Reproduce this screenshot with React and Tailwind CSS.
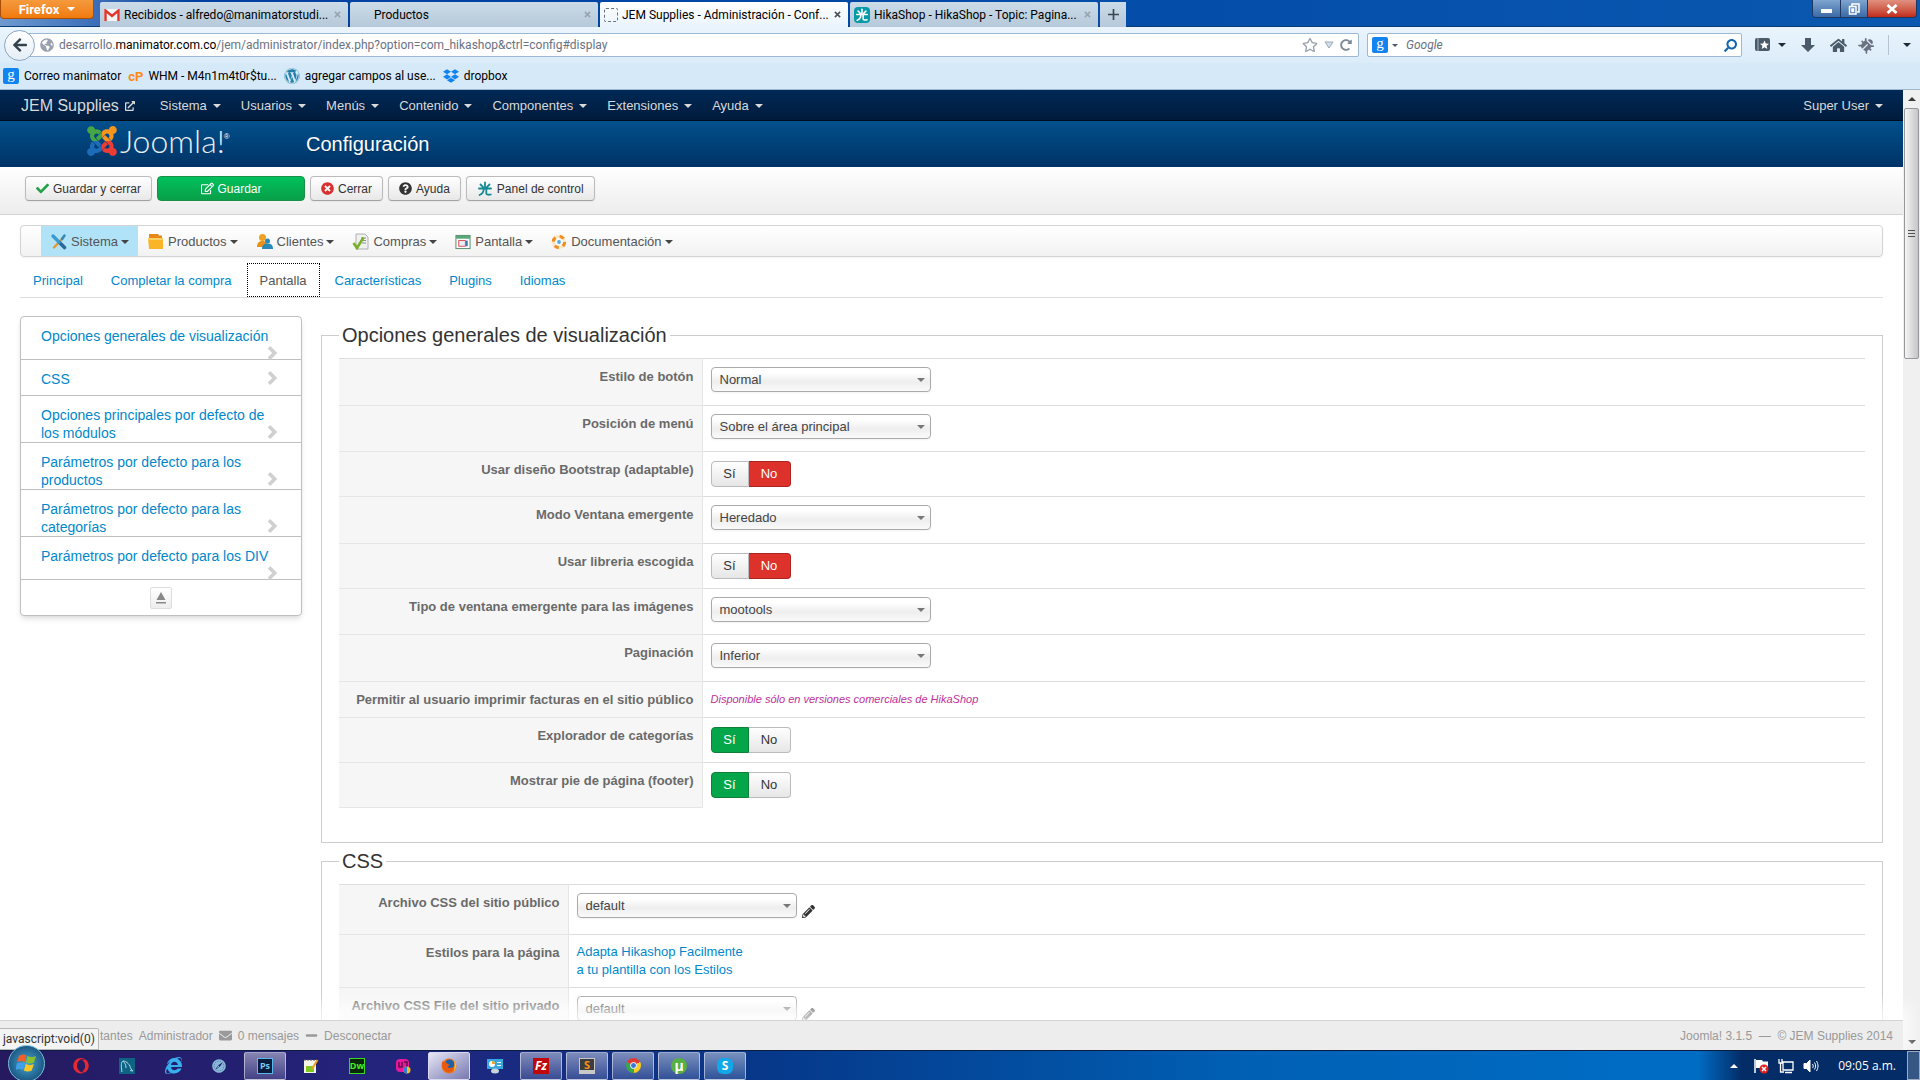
import React, { useState } from 'react'
import {
  FaJoomla,
  FaCheck,
  FaRegEdit,
  FaTimesCircle,
  FaQuestionCircle,
  FaExternalLinkAlt,
  FaWordpress,
  FaDropbox,
  FaGlobeAmericas,
  FaRegStar,
  FaPencilAlt,
  FaEnvelope,
  FaMinus,
  FaOpera,
  FaInternetExplorer,
  FaSafari,
  FaArrowLeft,
  FaHome,
  FaSearch,
  FaRedoAlt,
  FaBug,
} from 'react-icons/fa'

const TABS = [
  { title: 'Recibidos - alfredo@manimatorstudi...', icon: 'gmail' },
  { title: 'Productos' },
  { title: 'JEM Supplies - Administración - Conf...', icon: 'blank', active: true },
  { title: 'HikaShop - HikaShop - Topic: Pagina...', icon: 'hika' },
]

const NAV = ['Sistema', 'Usuarios', 'Menús', 'Contenido', 'Componentes', 'Extensiones', 'Ayuda']

const CONFIG_TABS = ['Principal', 'Completar la compra', 'Pantalla', 'Características', 'Plugins', 'Idiomas']

const SECTIONS = [
  'Opciones generales de visualización',
  'CSS',
  'Opciones principales por defecto de los módulos',
  'Parámetros por defecto para los productos',
  'Parámetros por defecto para las categorías',
  'Parámetros por defecto para los DIV',
]

const DISPLAY_ROWS = [
  { id: 'button_style', label: 'Estilo de botón', type: 'select', value: 'Normal', height: 'h-[47px]' },
  { id: 'menu_position', label: 'Posición de menú', type: 'select', value: 'Sobre el área principal', height: 'h-[46px]' },
  { id: 'bootstrap', label: 'Usar diseño Bootstrap (adaptable)', type: 'toggle', value: false, height: 'h-[45px]' },
  { id: 'popup_mode', label: 'Modo Ventana emergente', type: 'select', value: 'Heredado', height: 'h-[47px]' },
  { id: 'chosen', label: 'Usar libreria escogida', type: 'toggle', value: false, height: 'h-[45px]' },
  { id: 'image_popup', label: 'Tipo de ventana emergente para las imágenes', type: 'select', value: 'mootools', height: 'h-[46px]' },
  { id: 'pagination', label: 'Paginación', type: 'select', value: 'Inferior', height: 'h-[47px]' },
  {
    id: 'print_invoice',
    label: 'Permitir al usuario imprimir facturas en el sitio público',
    type: 'note',
    value: 'Disponible sólo en versiones comerciales de HikaShop',
    height: 'h-[36px]',
  },
  { id: 'explorer', label: 'Explorador de categorías', type: 'toggle', value: true, height: 'h-[45px]' },
  { id: 'footer', label: 'Mostrar pie de página (footer)', type: 'toggle', value: true, height: 'h-[45px]' },
]

function Caret({ className = '' }) {
  return (
    <svg viewBox="0 0 8 4" className={`w-2 h-1 shrink-0 ${className}`} fill="currentColor" aria-hidden="true">
      <path d="M0 0h8L4 4z" />
    </svg>
  )
}

/* ---------- Browser window ---------- */

function HikaMark({ className, stroke = '#fff' }) {
  return (
    <svg viewBox="0 0 16 16" className={className} fill="none" stroke={stroke} strokeWidth="1.8" strokeLinecap="round">
      <path d="M8 1.5v6M2 7.5h12M3.5 3.5l2.6 2.6M12.500 3.500L9.900 6.100M6.700 8c0 3-1.500 5-4.200 6M9.300 8v4.500c0 1.200 2.500 1.500 4.500 1" />
    </svg>
  )
}

function TabIcon({ icon }) {
  if (icon === 'gmail') {
    return (
      <svg viewBox="0 0 16 12" className="w-4 h-3 shrink-0">
        <rect width="16" height="12" rx="1" fill="#f4f4f4" />
        <path d="M1.500 12V1.500L8 7l6.500-5.500V12" fill="none" stroke="#e0352b" strokeWidth="2.400" />
      </svg>
    )
  }
  if (icon === 'blank') return <span className="w-[14px] h-[14px] shrink-0 border border-dashed border-gray-500 rounded-xs" />
  if (icon === 'hika') {
    return (
      <span className="w-4 h-4 shrink-0 rounded-sm bg-[#0899a8] flex items-center justify-center">
        <HikaMark className="w-[14px] h-[14px]" />
      </span>
    )
  }
  return <span className="w-4 h-4 shrink-0" />
}

function TabStrip() {
  return (
    <div className="h-[27px] flex items-start bg-linear-to-r from-[#6f9ad0] via-[#0040a0] via-10% to-[#0a58b0] border-b border-[#0a3c78]">
      <button className="w-[94px] h-[19px] shrink-0 rounded-b-sm border border-t-0 border-[#a84e08] bg-linear-to-b from-[#f59a3c] to-[#f07a08] text-white text-[13px] leading-none font-bold flex items-center justify-center gap-2">
        Firefox <Caret />
      </button>
      <div className="flex pt-[2px] pl-[6px] gap-[2px]" role="tablist">
        {TABS.map(tab => (
          <button
            key={tab.title}
            role="tab"
            aria-selected={!!tab.active}
            className={`w-[248px] h-[25px] pl-[4px] pr-[7px] flex items-center gap-[4px] text-xs text-black rounded-t-xs ${
              tab.active ? 'bg-linear-to-b from-white to-[#eaf4fc]' : 'bg-linear-to-b from-[#cbdbe8] to-[#b6c9da]'
            }`}
          >
            <TabIcon icon={tab.icon} />
            <span className="flex-1 text-left whitespace-nowrap">{tab.title}</span>
            <svg viewBox="0 0 8 8" className="w-[7px] h-[7px] shrink-0" stroke={tab.active ? '#4a5058' : '#98a4ae'} strokeWidth="1.800">
              <path d="M1 1l6 6M7 1l-6 6" />
            </svg>
          </button>
        ))}
        <button aria-label="Nueva pestaña" className="w-[26px] h-[25px] bg-linear-to-b from-[#cbdbe8] to-[#b6c9da] flex items-center justify-center">
          <svg viewBox="0 0 12 12" className="w-[11px] h-[11px]" stroke="#3a4650" strokeWidth="1.800">
            <path d="M6 0v12M0 6h12" />
          </svg>
        </button>
      </div>
      <div className="ml-auto mr-[3px] flex h-[18px] rounded-b border border-t-0 border-[#1c3860] overflow-hidden">
        <button aria-label="Minimizar" className="w-[28px] flex items-end justify-center pb-1 bg-linear-to-b from-[#7fa5cf] to-[#3c6aa6] border-r border-[#1c3860]">
          <span className="w-[11px] h-1 bg-white" />
        </button>
        <button aria-label="Restaurar" className="w-[27px] flex items-center justify-center bg-linear-to-b from-[#7fa5cf] to-[#3c6aa6] border-r border-[#1c3860]">
          <svg viewBox="0 0 12 12" className="w-3 h-3" fill="none" stroke="#fff" strokeWidth="1.500">
            <path d="M4 3V1h7v8H9M1.500 3.500h6.500v7.500H1.500zM4 6h1.500v2.500H4z" />
          </svg>
        </button>
        <button aria-label="Cerrar ventana" className="w-[48px] flex items-center justify-center bg-linear-to-b from-[#e09080] to-[#c02818] text-white">
          <svg viewBox="0 0 12 10" className="w-3 h-[10px]" stroke="#fff" strokeWidth="2.800">
            <path d="M1.500 1l9 8M10.500 1l-9 8" />
          </svg>
        </button>
      </div>
    </div>
  )
}

function GoogleG() {
  return (
    <span className="w-4 h-4 shrink-0 rounded-xs bg-[#1284f0] text-white font-['Liberation_Serif',serif] text-[15px] leading-[13px] text-center">g</span>
  )
}

function AddressBar() {
  return (
    <div className="h-[36px] flex items-center bg-linear-to-b from-[#eaf4fc] to-[#dbecf9] text-[#4a5a68]">
      <button aria-label="Atrás" className="ml-1 w-[31px] h-[31px] shrink-0 rounded-full border border-[#8ba6c0] bg-linear-to-b from-white to-[#e4eef6] flex items-center justify-center z-10">
        <FaArrowLeft className="w-4 h-4 text-[#34424e]" />
      </button>
      <div className="-ml-2 pl-[12px] pr-[6px] h-6 flex-1 flex items-center gap-[5px] bg-white border border-[#9db8d2] rounded-xs">
        <FaGlobeAmericas className="w-[14px] h-[14px] shrink-0 text-gray-400" />
        <p className="flex-1 text-xs text-gray-500 whitespace-nowrap">
          desarrollo.<span className="text-black">manimator.com.co</span>/jem/administrator/index.php?option=com_hikashop&amp;ctrl=config#display
        </p>
        <div className="flex items-center gap-[6px]">
          <FaRegStar className="w-4 h-4 text-gray-400" />
          <svg viewBox="0 0 10 8" className="w-[10px] h-2" fill="#d5dfe8" stroke="#9aa8b8">
            <path d="M1 1h8L5 7z" />
          </svg>
          <FaRedoAlt className="w-3 h-3 text-[#7c8b99]" />
        </div>
      </div>
      <label className="ml-[8px] w-[375px] h-6 px-1 flex items-center gap-1 bg-white border border-[#9db8d2] rounded-xs">
        <GoogleG />
        <Caret className="w-[6px] h-[3px]" />
        <input aria-label="Buscar" placeholder="Google" className="flex-1 ml-1 text-xs italic outline-none placeholder:text-gray-500" />
        <FaSearch className="w-[13px] h-[13px] text-[#1468b0] -scale-x-100" />
      </label>
      <div className="w-[178px] pl-[12px] pr-[9px] flex items-center justify-between">
        <span className="flex items-center gap-[6px]">
          <svg viewBox="0 0 18 16" className="w-[18px] h-4">
            <rect x="1" y="1" width="15" height="13" rx="2" fill="#4a5a68" />
            <path d="M4 1v13" stroke="#a8b8c4" />
            <path d="M10.500 3.500l1.300 2.900 3.200.3-2.400 2.100.7 3.200-2.800-1.700-2.800 1.700.7-3.200L6 6.700l3.200-.3z" fill="#fff" />
          </svg>
          <Caret className="text-gray-800" />
        </span>
        <svg viewBox="0 0 16 16" className="w-4 h-4" fill="currentColor">
          <path d="M5 1h6v7h4l-7 7-7-7h4z" />
        </svg>
        <FaHome className="w-[17px] h-[17px]" />
        <FaBug className="w-[14px] h-[14px] rotate-45 text-gray-500" />
        <span className="w-px h-5 bg-[#b4c4d2]" />
        <Caret className="text-gray-800" />
      </div>
    </div>
  )
}

function BookmarksBar() {
  return (
    <nav className="h-[27px] px-[3px] flex items-center gap-[7px] text-xs text-black bg-[#d6e9f8] border-b border-[#9db8cc]">
      <a href="#correo" className="flex items-center gap-[5px]"><GoogleG />Correo manimator</a>
      <a href="#whm" className="flex items-center gap-[5px]">
        <span className="font-bold text-[13px] leading-none text-[#ff8a10]">cP</span>WHM - M4n1m4t0r$tu...
      </a>
      <a href="#agregar" className="flex items-center gap-[5px]"><FaWordpress className="w-4 h-4 text-[#2480a8]" />agregar campos al use...</a>
      <a href="#dropbox" className="flex items-center gap-[5px]"><FaDropbox className="w-4 h-4 text-[#1284f0]" />dropbox</a>
    </nav>
  )
}

function Scrollbar() {
  return (
    <div className="w-[17px] shrink-0 flex flex-col items-center bg-[#f0f0f0] text-[#3a3a3a]" aria-hidden="true">
      <Caret className="rotate-180 my-[7px]" />
      <div className="w-[15px] h-[251px] rounded-xs border border-[#979797] bg-linear-to-r from-[#f5f5f5] to-[#c4c4ca] flex flex-col items-center justify-center gap-[2px]">
        <span className="w-[7px] h-px bg-[#505050]" />
        <span className="w-[7px] h-px bg-[#505050]" />
        <span className="w-[7px] h-px bg-[#505050]" />
      </div>
      <Caret className="mt-auto mb-[6px]" />
    </div>
  )
}

/* ---------- Joomla administrator ---------- */

function NavBar() {
  return (
    <nav className="h-[31px] pl-[21px] pr-5 pt-px flex items-center text-[13px] text-[#d9d9d9] bg-linear-to-b from-[#002957] to-[#001b3b] border-b border-[#000d1e]">
      <a href="#site" className="flex items-center gap-[6px] text-base">
        JEM Supplies <FaExternalLinkAlt className="w-[10px] h-[10px]" />
      </a>
      <div className="ml-[25px] flex gap-5">
        {NAV.map(item => (
          <a key={item} href="#menu" className="flex items-center gap-[6px]">{item} <Caret /></a>
        ))}
      </div>
      <a href="#user" className="ml-auto flex items-center gap-[6px]">Super User <Caret /></a>
    </nav>
  )
}

function JoomlaLogo() {
  return (
    <div className="flex items-center gap-[3px] w-[219px] pb-[6px]">
      <FaJoomla fill="url(#joomla-colors)" className="w-[30px] h-[34px]" />
      <span className="font-[Lato,sans-serif] font-light text-[32px] leading-none text-[#e9eef3]">Joomla!</span>
      <sup className="-ml-1 text-[8px] text-white">®</sup>
      <svg className="w-0 h-0" aria-hidden="true">
        <defs>
          <pattern id="joomla-colors" width="448" height="512" patternUnits="userSpaceOnUse">
            <rect width="224" height="256" fill="#46a546" />
            <rect x="224" width="224" height="256" fill="#f7941e" />
            <rect y="256" width="224" height="256" fill="#1c6cb8" />
            <rect x="224" y="256" width="224" height="256" fill="#ee3b33" />
          </pattern>
        </defs>
      </svg>
    </div>
  )
}

function ToolButton({ icon, children }) {
  return (
    <button className="h-[25px] px-[10px] flex items-center gap-1 rounded border border-[#bbb] border-b-[#a2a2a2] bg-linear-to-b from-white to-[#e8e8e8] shadow-xs text-xs text-[#333]">
      {icon}
      {children}
    </button>
  )
}

function Toolbar() {
  return (
    <div className="h-[48px] pl-[25px] pt-[9px] flex items-start gap-[5px] bg-linear-to-b from-white to-[#ededed] border-b border-[#d3d3d3]">
      <ToolButton icon={<FaCheck className="w-[13px] h-[13px] text-[#24a048]" />}>Guardar y cerrar</ToolButton>
      <button className="w-[148px] h-[25px] flex items-center justify-center gap-1 rounded border border-[#189048] bg-linear-to-b from-[#00c05c] to-[#08a048] text-xs text-white">
        <FaRegEdit className="w-[13px] h-[13px]" /> Guardar
      </button>
      <ToolButton icon={<FaTimesCircle className="w-[13px] h-[13px] text-[#d83030]" />}>Cerrar</ToolButton>
      <ToolButton icon={<FaQuestionCircle className="w-[13px] h-[13px]" />}>Ayuda</ToolButton>
      <ToolButton icon={<HikaMark className="w-4 h-4" stroke="#158a94" />}>Panel de control</ToolButton>
    </div>
  )
}

function ToolsIcon() {
  return (
    <svg viewBox="0 0 17 17" className="w-[17px] h-[17px]" strokeLinecap="round">
      <path d="M4 14.500L13 5" stroke="#e89828" strokeWidth="2.400" />
      <path d="M12 6l2.500-3.500" stroke="#3888b8" strokeWidth="2.600" />
      <path d="M9 9L14.500 14.500" stroke="#2a6a9a" strokeWidth="3.600" />
      <path d="M3 3L9 9" stroke="#3a9ad0" strokeWidth="3.400" />
    </svg>
  )
}

function FolderIcon() {
  return (
    <svg viewBox="0 0 17 17" className="w-[17px] h-[17px]">
      <path d="M2 1h9l1 1.500h3V6H2z" fill="#e88818" />
      <path d="M1 5h15v11H2z" fill="#f9b428" />
      <path d="M1 5h15v2H1z" fill="#fcd060" />
    </svg>
  )
}

function UsersIcon() {
  return (
    <svg viewBox="0 0 17 17" className="w-[17px] h-[17px]">
      <circle cx="6.500" cy="4.500" r="3.500" fill="#f0a020" />
      <path d="M1 14c0-4 2-6 5.500-6S11 10 11 14z" fill="#e89018" />
      <circle cx="11.500" cy="8" r="2.500" fill="#2888b8" />
      <path d="M6 16c0-4 2-5.500 5.500-5.500S17 12 17 16z" fill="#2888b8" />
    </svg>
  )
}

function OrdersIcon() {
  return (
    <svg viewBox="0 0 17 17" className="w-[17px] h-[17px]">
      <path d="M4 1h9l3 3v12H4z" fill="#f0f0f0" stroke="#b0b0b0" />
      <path d="M9 5h5M9 7.500h5M10 10h4" stroke="#909090" />
      <path d="M1.500 10l3.500 5L11.500 4.500" fill="none" stroke="#78b028" strokeWidth="2.600" />
    </svg>
  )
}

function ScreenIcon() {
  return (
    <svg viewBox="0 0 17 17" className="w-4 h-4">
      <rect x="1" y="1.500" width="15" height="14" fill="#fff" stroke="#508868" />
      <path d="M1 2h15v3H1z" fill="#58a878" />
      <rect x="4" y="7" width="7" height="6" fill="#e8f0f8" stroke="#d84848" />
      <path d="M12.500 7v6" stroke="#3878b0" strokeWidth="2" />
    </svg>
  )
}

function LifebuoyIcon() {
  return (
    <svg viewBox="0 0 17 17" className="w-4 h-4">
      <circle cx="8.500" cy="8.500" r="6" fill="none" stroke="#fbe6c4" strokeWidth="3" />
      <circle cx="8.500" cy="8.500" r="6" fill="none" stroke="#f09020" strokeWidth="3.400" strokeDasharray="4.700 4.720" />
      <circle cx="8.500" cy="8.500" r="2" fill="#58a8d8" />
    </svg>
  )
}

const SHOP_MENU = [
  { label: 'Sistema', icon: <ToolsIcon />, active: true },
  { label: 'Productos', icon: <FolderIcon /> },
  { label: 'Clientes', icon: <UsersIcon /> },
  { label: 'Compras', icon: <OrdersIcon /> },
  { label: 'Pantalla', icon: <ScreenIcon /> },
  { label: 'Documentación', icon: <LifebuoyIcon /> },
]

function ShopMenu() {
  return (
    <nav className="h-[32px] pl-5 flex rounded border border-[#d4d4d4] bg-linear-to-b from-white to-[#f2f2f2] shadow-xs text-[13px] text-[#555]">
      {SHOP_MENU.map(item => (
        <a key={item.label} href="#shop" className={`px-[9px] pt-px flex items-center gap-1 ${item.active ? 'bg-[#b0e3f7]' : ''}`}>
          {item.icon}
          <span className="flex items-center gap-[3px]">{item.label}<Caret className="text-[#444]" /></span>
        </a>
      ))}
    </nav>
  )
}

function ConfigTabs() {
  return (
    <div className="mt-[6px] flex items-end gap-[2px] border-b border-[#ddd] text-[13px]">
      {CONFIG_TABS.map(tab => (
        <a
          key={tab}
          href="#display"
          className={`h-[34px] px-3 pt-px flex items-center border ${
            tab === 'Pantalla' ? 'border-dotted border-black text-[#555]' : 'border-transparent text-[#0088cc]'
          }`}
        >
          {tab}
        </a>
      ))}
    </div>
  )
}

function SectionList() {
  return (
    <aside className="w-[282px] shrink-0 self-start rounded border border-[#c0c0c0] bg-white shadow-md text-sm leading-[18px]">
      <ul>
        {SECTIONS.map(section => (
          <li key={section} className="min-h-[36px] flow-root pl-5 pr-[23px] pt-[10px] border-b border-[#c0c0c0]">
            <a href="#section" className="text-[#0088cc]">
              {section}
              <svg viewBox="0 0 11 14" className="float-right w-[11px] h-[14px] mt-px -mb-px" fill="none" stroke="#d0d0d0" strokeWidth="3.600">
                <path d="M2 1.300L7.700 7 2 12.700" />
              </svg>
            </a>
          </li>
        ))}
      </ul>
      <div className="h-[35px] flex items-center justify-center">
        <button aria-label="Subir" className="w-[22px] h-[22px] flex items-center justify-center rounded-xs border border-[#ddd] bg-linear-to-b from-white to-[#eee]">
          <svg viewBox="0 0 10 12" className="w-[10px] h-3" fill="#888">
            <path d="M5 0l4.500 8h-9zM0 10h10v1.500H0z" />
          </svg>
        </button>
      </div>
    </aside>
  )
}

function SelectBox({ id, value }) {
  return (
    <span className="relative w-[220px] h-[25px] flex items-center">
      <select
        id={id}
        defaultValue={value}
        className="w-full h-full pl-2 appearance-none rounded border border-[#aaa] bg-linear-to-b from-white from-20% via-[#eee] via-60% to-[#fafafa] shadow-xs text-[13px] text-[#444] outline-none"
      >
        <option>{value}</option>
      </select>
      <Caret className="absolute right-[6px] text-[#777]" />
    </span>
  )
}

function Toggle({ id, value }) {
  const [on, setOn] = useState(value)
  const off = 'border-[#bbb] bg-linear-to-b from-white to-[#e6e6e6] text-[#333]'
  return (
    <span className="inline-flex h-[26px] text-[13px]" role="radiogroup" aria-labelledby={`${id}-label`}>
      <label className={`relative w-[38px] flex items-center justify-center rounded-l border ${on ? 'border-[#108038] bg-[#05a549] text-white' : off}`}>
        <input type="radio" name={id} className="sr-only" checked={on} onChange={() => setOn(true)} />
        Sí
      </label>
      <label className={`relative w-[42px] flex items-center justify-center rounded-r border border-l-0 ${on ? off : 'border-[#b02420] bg-[#dc322b] text-white'}`}>
        <input type="radio" name={id} className="sr-only" checked={!on} onChange={() => setOn(false)} />
        No
      </label>
    </span>
  )
}

function Row({ id, label, height, labelWidth, children, plain }) {
  return (
    <tr className={`${height} border-t border-[#ddd]`}>
      <th
        scope="row"
        id={`${id}-label`}
        className={`${labelWidth} px-2 pt-[9px] align-top text-right font-bold leading-[18px] text-[#6a6a6a] bg-[#f6f6f6] border-r border-b border-[#e6e6e6] whitespace-nowrap`}
      >
        {plain ? label : <label htmlFor={id}>{label}</label>}
      </th>
      <td className="pl-2 pt-2 align-top leading-[18px]">{children}</td>
    </tr>
  )
}

function Group({ title, className = '', children }) {
  return (
    <fieldset className={`px-[17px] border border-[#ccc] ${className}`}>
      <legend className="px-[3px] text-[20px] leading-5 text-[#333]">{title}</legend>
      <table className="mt-[13px] w-full border-collapse text-[13px]">
        <tbody>{children}</tbody>
      </table>
    </fieldset>
  )
}

function DisplaySettings() {
  return (
    <Group title="Opciones generales de visualización" className="pb-[34px]">
      {DISPLAY_ROWS.map(row => (
        <Row key={row.id} id={row.id} label={row.label} height={row.height} labelWidth="w-[363px]" plain={row.type !== 'select'}>
          {row.type === 'select' && <SelectBox id={row.id} value={row.value} />}
          {row.type === 'toggle' && <div className="pt-px"><Toggle id={row.id} value={row.value} /></div>}
          {row.type === 'note' && <em className="text-[11px] text-[#c0309c]">{row.value}</em>}
        </Row>
      ))}
    </Group>
  )
}

function CssFileField({ id }) {
  return (
    <div className="flex items-end gap-[5px]">
      <SelectBox id={id} value="default" />
      <FaPencilAlt className="w-[13px] h-[13px] text-[#333]" />
    </div>
  )
}

function CssSettings() {
  return (
    <Group title="CSS" className="mt-2 pb-8">
      <Row id="css_front" label="Archivo CSS del sitio público" height="h-[50px]" labelWidth="w-[229px]">
        <CssFileField id="css_front" />
      </Row>
      <Row id="css_style" label="Estilos para la página" height="h-[53px]" labelWidth="w-[229px]" plain>
        <a href="#estilos" className="block text-[#0088cc]">
          Adapta Hikashop Facilmente<br />a tu plantilla con los Estilos
        </a>
      </Row>
      <Row id="css_back" label="Archivo CSS File del sitio privado" height="h-[50px]" labelWidth="w-[229px]">
        <CssFileField id="css_back" />
      </Row>
    </Group>
  )
}

function StatusBar() {
  return (
    <footer className="relative z-10 h-[30px] shrink-0 pr-[10px] flex items-center gap-[6px] bg-[#ededed] border-t border-[#d4d4d4] text-xs text-[#999] shadow-[0_-8px_16px_8px_rgba(255,255,255,0.7)]">
      <span className="self-end w-[99px] h-[22px] -mr-[5px] px-[3px] flex items-center bg-[#f4f4f4] border border-l-0 border-[#b8b8b8] rounded-tr-xs font-[Roboto,sans-serif] text-[#333]">
        javascript:void(0)
      </span>
      <span>tantes</span>
      <a href="#admin">Administrador</a>
      <FaEnvelope className="w-[13px] h-[13px]" />
      <a href="#mensajes">0 mensajes</a>
      <FaMinus className="w-[13px] h-[13px]" />
      <a href="#salir">Desconectar</a>
      <span className="ml-auto">Joomla! 3.1.5 &nbsp;—&nbsp; © JEM Supplies 2014</span>
    </footer>
  )
}

/* ---------- Windows taskbar ---------- */

function Tile({ className, children }) {
  return <span className={`w-4 h-4 flex items-center justify-center leading-none font-bold ${className}`}>{children}</span>
}

const APPS = [
  { name: 'Opera', icon: <FaOpera className="w-4 h-4 text-[#e82830]" /> },
  {
    name: 'MySQL Workbench',
    icon: (
      <Tile className="bg-[#0e6484]">
        <svg viewBox="0 0 16 16" className="w-4 h-4" fill="none" stroke="#b0d8e4">
          <path d="M3 14C2 8 2 4 4 3c4 0 7 4 8 8l2 2-3-.5M4 3c2 2 3 4 3 7" />
        </svg>
      </Tile>
    ),
  },
  { name: 'Internet Explorer', icon: <FaInternetExplorer className="w-[17px] h-[17px] text-[#38b0f0]" /> },
  { name: 'Safari', icon: <FaSafari className="w-[14px] h-[14px] text-[#88b8d8]" /> },
  { name: 'Photoshop', icon: <Tile className="text-[9px] bg-[#0a1c3c] border border-[#58b8f0] text-[#78c8f8]">Ps</Tile>, open: true },
  {
    name: 'Notepad++',
    icon: (
      <svg viewBox="0 0 16 16" className="w-4 h-4">
        <path d="M1 2h12v13H1z" fill="#f4f4e8" />
        <path d="M3 8h8v6H3z" fill="#80c820" />
        <path d="M2 1v2M5 1v2M8 1v2M11 1v2" stroke="#555" />
        <path d="M14.500 2L9 11" stroke="#f0a020" strokeWidth="2" />
      </svg>
    ),
  },
  { name: 'Dreamweaver', icon: <Tile className="text-[9px] bg-[#082808] border border-[#38d820] text-[#48f028]">Dw</Tile> },
  {
    name: 'Wamp',
    icon: (
      <svg viewBox="0 0 16 16" className="w-4 h-4">
        <rect x="1" y="1" width="13" height="13" rx="4" fill="#e8189c" />
        <path d="M4 4v5h3V4M9 4h3v5" fill="none" stroke="#601048" strokeWidth="1.500" />
        <circle cx="12" cy="12" r="3.500" fill="#f0c020" />
        <path d="M12 8.500A3.500 3.500 0 0 0 12 15.500z" fill="#3878d0" />
      </svg>
    ),
  },
  {
    name: 'Firefox',
    icon: (
      <svg viewBox="0 0 16 16" className="w-4 h-4">
        <circle cx="8" cy="8" r="7.500" fill="#f07818" />
        <circle cx="8.500" cy="6.500" r="5" fill="#2060a8" />
        <path d="M1 4c2-1 4 0 5 1.500L9 7 6.500 8.500C8 11 12 10.500 13.500 7c.5 5-3 8-6.500 7.500S0 9 1 4z" fill="#e85a10" />
        <path d="M13 2.500c3 3 3 8-.5 11 1-3 1.500-7 .5-11z" fill="#f8c030" />
      </svg>
    ),
    open: true,
    current: true,
  },
  {
    name: 'Panel',
    icon: (
      <svg viewBox="0 0 16 16" className="w-4 h-4">
        <rect x="0" y="1" width="16" height="10" fill="#38a8e0" />
        <circle cx="5" cy="6" r="3" fill="#fff" />
        <path d="M5 6V3a3 3 0 0 1 3 3z" fill="#f0a020" />
        <path d="M10 4.500h4M10 7.500h4" stroke="#fff" />
        <ellipse cx="8" cy="13" rx="4" ry="2.500" fill="#c8d4dc" />
      </svg>
    ),
  },
  { name: 'FileZilla', icon: <Tile className="bg-[#c00808] text-white text-[12px] italic">Fz</Tile>, open: true },
  { name: 'Sublime Text', icon: <Tile className="bg-[#3c3c3c] border border-b-4 border-[#c8c8c8] text-[#f89020] text-[11px]">S</Tile>, open: true },
  {
    name: 'Chrome',
    icon: (
      <span className="w-[15px] h-[15px] rounded-full flex items-center justify-center bg-[conic-gradient(from_-60deg,#e03c30_0_120deg,#f8cc20_120deg_240deg,#38a850_240deg)]">
        <span className="w-[7px] h-[7px] rounded-full bg-[#3878d8] border border-white" />
      </span>
    ),
    open: true,
  },
  { name: 'uTorrent', icon: <Tile className="rounded-full bg-[#58b040] text-white text-[14px]">µ</Tile>, open: true },
  { name: 'Skype', icon: <Tile className="rounded-md bg-[#10a8e8] text-white text-[12px]">S</Tile>, open: true },
]

function appClass(app) {
  if (app.current) return 'border-[#d8d8f0] bg-linear-to-br from-[#e8e8f4] to-[#7878b0]'
  if (app.open) return 'border-white/50 bg-linear-to-b from-white/45 to-white/15'
  return 'border-transparent'
}

function Taskbar() {
  return (
    <div className="relative z-20 h-[30px] shrink-0 flex items-center border-t border-[#0a1c40] bg-[linear-gradient(to_right,#251a60,#23247c_20%,#06388a_40%,#0060b4_65%,#006cc4_85%)] font-['Open_Sans',sans-serif]">
      <button aria-label="Inicio" className="relative ml-2 w-[38px] h-[30px] shrink-0">
        <span className="absolute left-0 -top-[6px] w-[37px] h-[37px] rounded-full border border-[#7cc0dc] bg-radial from-[#48a8d0] to-[#0c3c68] flex items-center justify-center">
          <svg viewBox="0 0 22 22" className="w-[22px] h-[22px]">
            <path d="M3 4c3-2 5-2 7.500-.5L9 10C6.500 8.500 4 8.500 1 10z" fill="#f06028" />
            <path d="M11.500 4c3 1.500 5.500 1.500 8.500 0l-2 6.500c-3 1.500-5.500 1.200-8 0z" fill="#88c030" />
            <path d="M.8 11.500c3-1.500 5.500-1.500 8 0L7 18c-2.500-1.500-5-1.500-7.500 0z" fill="#40a0e8" />
            <path d="M9.800 12c3 1.500 5 1.500 8 0l-2 6.500c-3 1.500-5.500 1.200-8 0z" fill="#f8c828" />
          </svg>
        </span>
      </button>
      <div className="ml-[14px] flex gap-1">
        {APPS.map(app => (
          <button key={app.name} aria-label={app.name} className={`w-[42px] h-[28px] rounded-xs border flex items-center justify-center ${appClass(app)}`}>
            {app.icon}
          </button>
        ))}
      </div>
      <div className="ml-auto h-full pl-8 flex items-center gap-[9px] text-xs text-white bg-linear-to-r from-transparent to-[#042c66] to-20%">
        <Caret className="rotate-180 mr-[6px]" />
        <svg viewBox="0 0 16 16" className="w-4 h-4">
          <path d="M2 1v14" stroke="#fff" strokeWidth="1.500" />
          <path d="M3 2h6l1 1.500h5V10H3z" fill="#fff" />
          <circle cx="11" cy="11" r="4.500" fill="#e02020" />
          <path d="M9 9l4 4M13 9l-4 4" stroke="#fff" strokeWidth="1.500" />
        </svg>
        <svg viewBox="0 0 16 16" className="w-4 h-4" fill="none" stroke="#fff" strokeWidth="1.300">
          <path d="M5 4h10v8H5zM7 14.500h7M1 1v4h3V1M2.500 5v9H6" />
        </svg>
        <svg viewBox="0 0 16 16" className="w-4 h-4" fill="none" stroke="#fff">
          <path d="M1 5.500h2.500L7 2v12l-3.500-3.500H1z" fill="#fff" />
          <path d="M9.500 6c1 1.500 1 3 0 4M11.500 4.500c1.500 2.500 1.500 4.500 0 7M13.500 3c2 3.500 2 6.500 0 10" />
        </svg>
        <span className="ml-[10px]">09:05 a.m.</span>
        <span className="ml-[2px] w-[13px] h-full border border-white/50 bg-white/20" />
      </div>
    </div>
  )
}

export default function App() {
  return (
    <div className="h-screen flex flex-col overflow-hidden bg-white font-['Liberation_Sans',Arial,sans-serif]">
      <div className="shrink-0 font-[Roboto,sans-serif]">
        <TabStrip />
        <AddressBar />
        <BookmarksBar />
      </div>
      <div className="flex-1 min-h-0 flex">
        <div className="flex-1 min-w-0 flex flex-col">
          <div className="flex-1 min-h-0 overflow-hidden">
            <NavBar />
            <header className="h-[46px] pl-[87px] flex items-center bg-linear-to-b from-[#02508c] to-[#003366] text-white">
              <JoomlaLogo />
              <h1 className="text-xl text-shadow-sm">Configuración</h1>
            </header>
            <Toolbar />
            <main className="px-5 pt-[10px]">
              <ShopMenu />
              <ConfigTabs />
              <div className="mt-[18px] flex gap-[19px]">
                <SectionList />
                <div className="flex-1 min-w-0 pt-[9px]">
                  <DisplaySettings />
                  <CssSettings />
                </div>
              </div>
            </main>
          </div>
          <StatusBar />
        </div>
        <Scrollbar />
      </div>
      <Taskbar />
    </div>
  )
}
